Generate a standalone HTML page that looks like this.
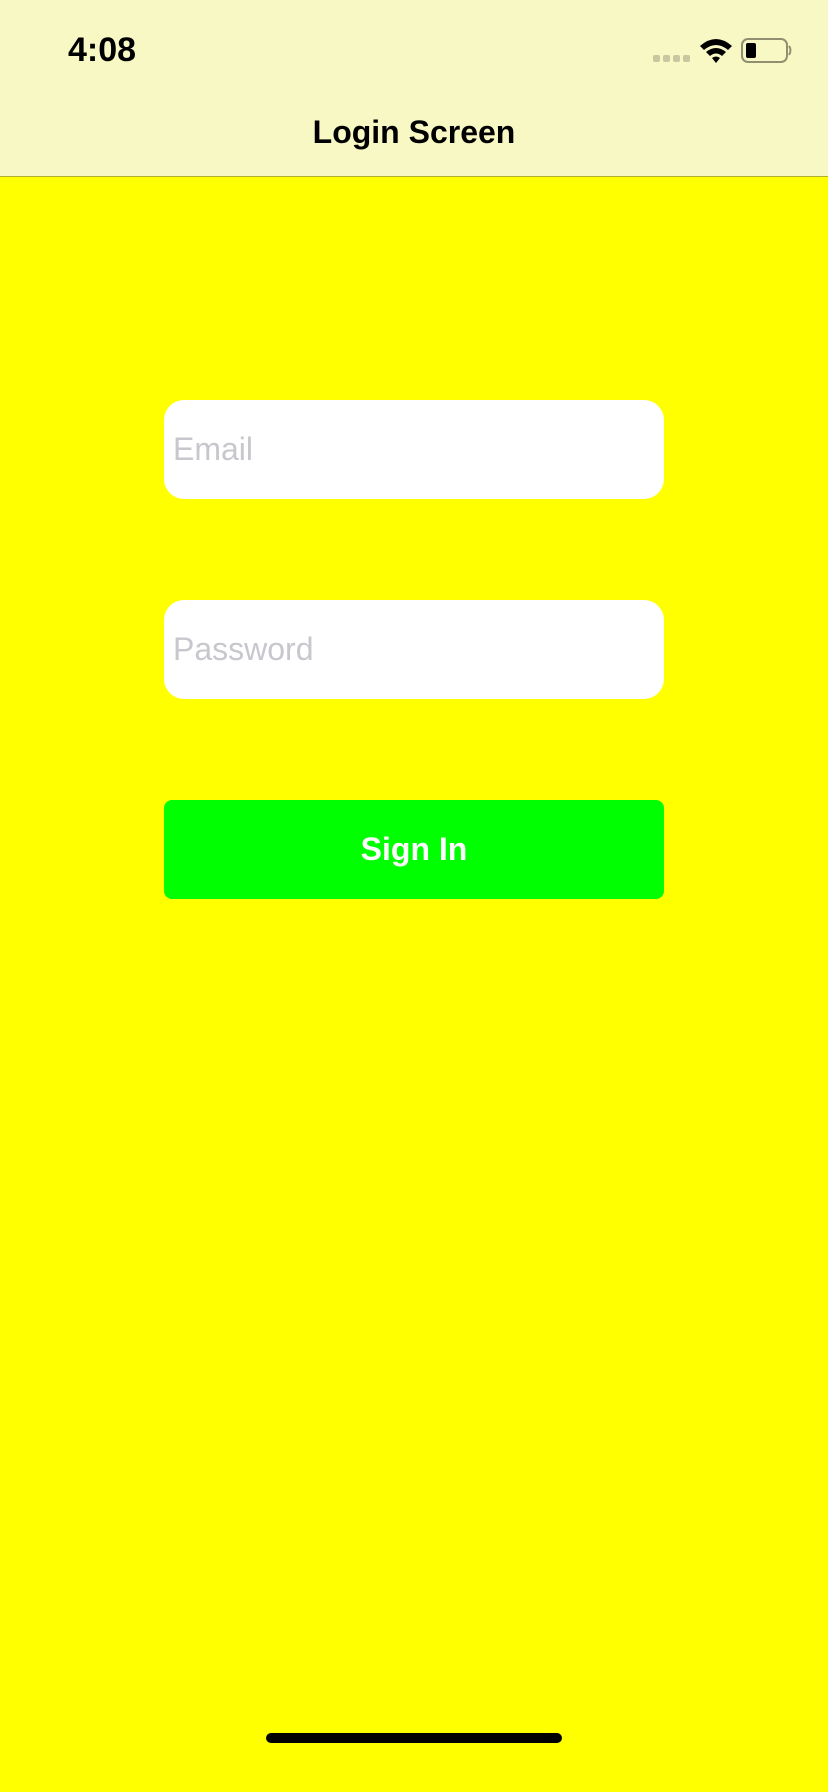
<!DOCTYPE html>
<html><head><meta charset="utf-8"><style>
*{margin:0;padding:0;box-sizing:border-box}
body{width:828px;height:1792px;background:#ffff00;font-family:"Liberation Sans",sans-serif;position:relative;overflow:hidden}
.hdr{position:absolute;left:0;top:0;width:828px;height:177px;background:#f8f8c4;border-bottom:1px solid #b0b030}
.time{position:absolute;left:68px;top:31px;font-size:34px;font-weight:bold;color:#000}
.title{position:absolute;left:0;width:828px;top:114px;text-align:center;font-size:32px;font-weight:bold;color:#000}
.f{position:absolute;left:164px;width:500px;height:99px;background:#fff;border-radius:20px;font-size:32px;color:#c7c7cd;padding-left:9px;line-height:99px}
.btn{position:absolute;left:164px;width:500px;top:800px;height:99px;background:#00ff00;border-radius:8px;color:#fff;font-size:32px;font-weight:bold;text-align:center;line-height:99px}
.home{position:absolute;left:266px;top:1733px;width:296px;height:10px;background:#000;border-radius:5px}
</style></head><body>
<div class="hdr">
<div class="time">4:08</div>
<svg style="position:absolute;left:650px;top:28px" width="150" height="50" viewBox="0 0 150 50">
<g fill="#c8c8a0"><rect x="3" y="27" width="7" height="7" rx="2"/><rect x="13" y="27" width="7" height="7" rx="2"/><rect x="23" y="27" width="7" height="7" rx="2"/><rect x="33" y="27" width="7" height="7" rx="2"/></g>
<path d="M50 18 Q66 4 82 18 L78 22 Q66 12 54 22Z M56 24 Q66 16 76 24 L72 28 Q66 23 60 28Z M62 30 Q66 27 70 30 L66 35Z" fill="#000"/>
<rect x="92" y="11" width="45" height="23" rx="6" fill="none" stroke="#909070" stroke-width="2"/>
<rect x="96" y="15" width="10" height="15" rx="2" fill="#000"/>
<path d="M139 18 q3 4 0 9" stroke="#909070" stroke-width="2" fill="none"/>
</svg>
<div class="title">Login Screen</div>
</div>
<div class="f" style="top:400px">Email</div>
<div class="f" style="top:600px">Password</div>
<div class="btn">Sign In</div>
<div class="home"></div>
</body></html>
